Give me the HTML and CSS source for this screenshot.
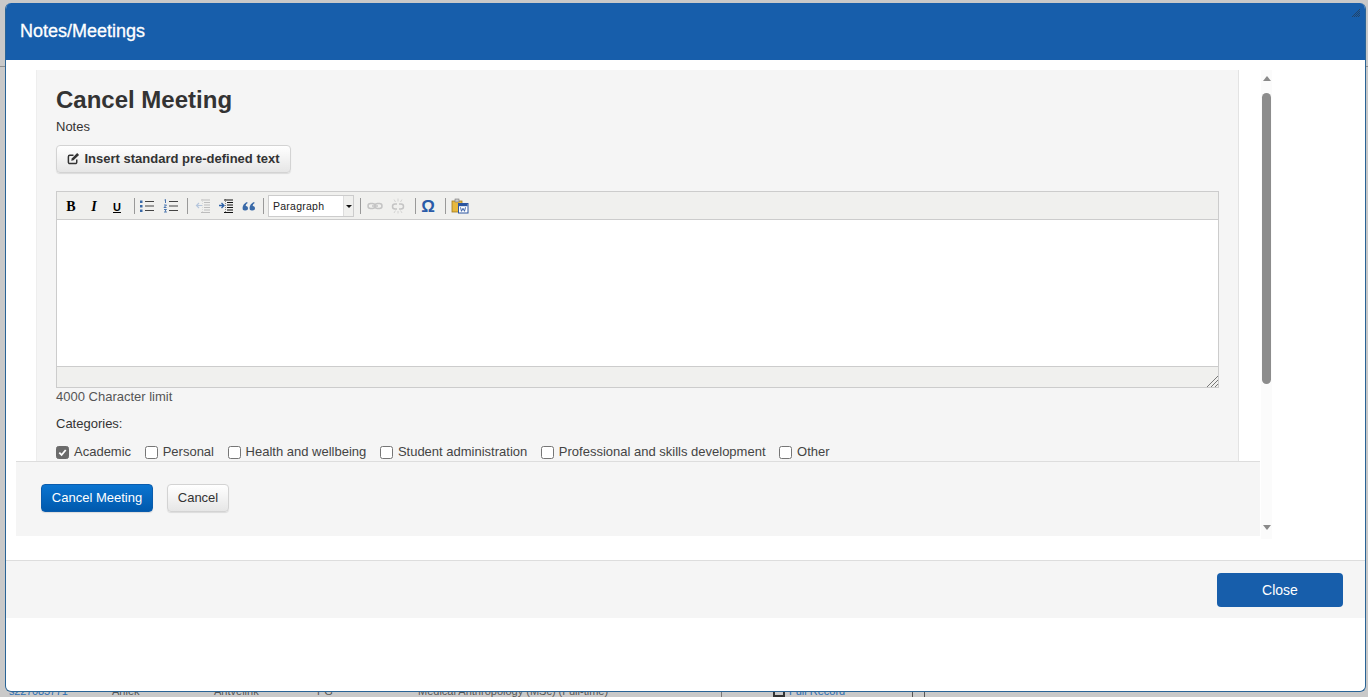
FILE: index.html
```html
<!DOCTYPE html>
<html lang="en">
<head>
<meta charset="utf-8">
<title>Notes/Meetings</title>
<link rel="stylesheet" href="styles.css">
</head>
<body>
<div class="backdrop">
  <div class="bg-line"></div>
  <div class="bg-row">
    <span class="c1">s227085771</span><span class="c2">Ahlek</span><span class="c3">Antvelink</span><span class="c4">PG</span><span class="c5">Medical Anthropology (MSc) (Full-time)</span><span class="c6"><svg class="bg-ic" viewBox="0 0 12 12"><path d="M1 1h10v10H1z" fill="none" stroke="#333" stroke-width="2"/></svg>Full Record</span><span class="c7"></span>
  </div>
</div>
<div class="dialog">
  <header class="dlg-head">
    <h1>Notes/Meetings</h1>
    <svg class="grip" viewBox="0 0 8 8"><path d="M0 8 8 0M2 8l6-6M4 8l4-4M6 8l2-2" stroke="#2a3a4a" stroke-width=".7" fill="none"/></svg>
  </header>
  <div class="dlg-body">
    <div class="scrollpane">
      <div class="content">
        <div class="card">
          <h2>Cancel Meeting</h2>
          <div class="lbl-notes">Notes</div>
          <button class="btn btn-insert">
            <svg class="ic-edit" viewBox="0 0 14 14"><path d="M10.500 8v3a1.500 1.500 0 0 1-1.500 1.500H3A1.500 1.500 0 0 1 1.500 11V5A1.500 1.500 0 0 1 3 3.500h4" fill="none" stroke="#333" stroke-width="1.600"/><path d="M4.500 9.500l.6-2.500L11 1.200l2 2L7 9z" fill="#333"/></svg>
            Insert standard pre-defined text
          </button>
          <div class="editor">
            <div class="toolbar">
              <span class="tb tb-b">B</span><span class="tb tb-i">I</span><span class="tb tb-u">U</span>
              <i class="sep sep-1"></i>
              <svg class="ti ti-wide" viewBox="0 0 16 14"><g fill="#3a6aa8"><rect x="1" y="1.500" width="2.500" height="2.500"/><rect x="1" y="6" width="2.500" height="2.500"/><rect x="1" y="10.500" width="2.500" height="2.500"/></g><path d="M6 2.500h9M6 7h9M6 11.500h9" stroke="#444" stroke-width="1.100"/></svg>
              <svg class="ti ti-wide" viewBox="0 0 16 14"><path d="M6 2.500h9M6 7h9M6 11.500h9" stroke="#444" stroke-width="1.100"/><path d="M1.500 1l1-.5V4M1 6h2.500L1 8.500h2.500M1 10.500h2.500L2 11.800l1.500 1.200H1" stroke="#3a6aa8" stroke-width=".9" fill="none"/></svg>
              <i class="sep sep-2"></i>
              <svg class="ti" viewBox="0 0 16 14"><path d="M6 1h9M9 3.500h6M9 6h6M9 8.500h6M9 11h6M6 13.500h9" stroke="#bdbdbd" stroke-width="1"/><path d="M7 6.500H1.500M4 4 1.500 6.500 4 9" stroke="#b5c6dc" stroke-width="1.200" fill="none"/><path d="M7.500 0v14" stroke="#ccc" stroke-width=".6" stroke-dasharray="1 1"/></svg>
              <svg class="ti" viewBox="0 0 16 14"><path d="M6 1h9M9 3.500h6M9 6h6M9 8.500h6M9 11h6M6 13.500h9" stroke="#111" stroke-width="1.100"/><path d="M1 6.500h5M3.500 4 6 6.500 3.500 9" stroke="#2d62a8" stroke-width="1.300" fill="none"/><path d="M7.500 0v14" stroke="#444" stroke-width=".6" stroke-dasharray="1 1"/></svg>
              <svg class="ti" viewBox="0 0 16 14"><path d="M2 11c-1-3 0-6 4-8l.7 1C5 5 4.600 6 4.800 7c1.600 0 2.200 1.200 2.200 2.200C7 10.500 6 11.500 4.500 11.500 3.300 11.500 2.400 11.300 2 11zM9 11c-1-3 0-6 4-8l.7 1c-1.700 1-2.100 2-1.900 3 1.600 0 2.200 1.200 2.200 2.200 0 1.300-1 2.300-2.500 2.300-1.200 0-2.100-.2-2.500-.5z" fill="#3a6aa8"/></svg>
              <i class="sep sep-3"></i>
              <div class="select"><span class="select-val">Paragraph</span><span class="select-arrow"></span></div>
              <i class="sep sep-4"></i>
              <svg class="ti" viewBox="0 0 16 14"><rect x="1" y="4.500" width="7" height="5" rx="2.500" fill="none" stroke="#c4c4c4" stroke-width="1.500"/><rect x="8" y="4.500" width="7" height="5" rx="2.500" fill="none" stroke="#c4c4c4" stroke-width="1.500"/><path d="M5 7h6" stroke="#c4c4c4" stroke-width="1.500"/></svg>
              <svg class="ti ti-unlink" viewBox="0 0 16 16"><path d="M7 6H5a2.500 2.500 0 0 0 0 5h2M9 6h2a2.500 2.500 0 0 1 0 5H9" fill="none" stroke="#c4c4c4" stroke-width="1.500"/><path d="M8 .5v3M8 13v2.500M4 1.500l1.500 2.500M12 1.500l-1.500 2.500M4 15l1.500-2.500M12 15l-1.500-2.500" stroke="#ccc" stroke-width=".8"/></svg>
              <i class="sep sep-5"></i>
              <span class="tb tb-omega">Ω</span>
              <i class="sep sep-6"></i>
              <svg class="ti ti-word" viewBox="0 0 18 16"><rect x="1" y="3" width="10" height="11" fill="#e7b83e" stroke="#a07a20" stroke-width=".8"/><rect x="4" y="1" width="4" height="3" fill="#c9c9c9" stroke="#777" stroke-width=".6"/><rect x="7.500" y="5.500" width="9.500" height="9.500" fill="#fff" stroke="#2a55a0"/><rect x="8" y="6" width="8.500" height="2.200" fill="#2a55a0"/><path d="M9.500 9.300l1 4 1.500-3 1.500 3 1-4" stroke="#2a55a0" fill="none" stroke-width=".9"/></svg>
            </div>
            <div class="edit-area"></div>
            <div class="statusbar">
              <svg class="resize" viewBox="0 0 11 11"><path d="M0 11 11 0M4 11l7-7M8 11l3-3" stroke="#777" stroke-width="1" fill="none"/></svg>
            </div>
          </div>
          <div class="limit">4000 Character limit</div>
          <div class="cat-label">Categories:</div>
          <div class="cats">
            <label class="cat"><span class="cb cb-on"><svg viewBox="0 0 12 12"><path d="M2.500 6.200 5 8.700l4.500-5.400" fill="none" stroke="#fff" stroke-width="2"/></svg></span>Academic</label>
            <label class="cat"><span class="cb"></span>Personal</label>
            <label class="cat"><span class="cb"></span>Health and wellbeing</label>
            <label class="cat"><span class="cb"></span>Student administration</label>
            <label class="cat"><span class="cb"></span>Professional and skills development</label>
            <label class="cat"><span class="cb"></span>Other</label>
          </div>
        </div>
        <div class="actions">
          <button class="btn btn-primary">Cancel Meeting</button>
          <button class="btn btn-cancel">Cancel</button>
        </div>
      </div>
      <div class="scrollbar">
        <span class="arrow arrow-up"></span>
        <span class="thumb"></span>
        <span class="arrow arrow-down"></span>
      </div>
    </div>
  </div>
  <footer class="dlg-foot">
    <button class="btn-close">Close</button>
  </footer>
</div>
</body>
</html>
```

FILE: styles.css
```css
* { box-sizing: border-box; }
html, body { margin: 0; height: 100%; overflow: hidden; }
body {
  background: #c9c9c9;
  font-family: "Liberation Sans", Arial, sans-serif;
  font-size: 13px;
  color: #333;
}
.backdrop { height: 697px; display: flex; flex-direction: column; }
.bg-line { margin-top: 66px; height: 1px; background: #8e8e8e; }
.bg-row {
  margin-top: auto;
  display: flex;
  height: 12px;
  font-size: 11px;
  line-height: 12px;
  color: #555;
  white-space: nowrap;
}
.bg-row span { display: block; }
.c1 { width: 112px; padding-left: 9px; color: #2b6cb0; letter-spacing: -.2px; }
.c2 { width: 102px; }
.c3 { width: 103px; }
.c4 { width: 101px; }
.c5 { width: 304px; border-right: 1px solid #777; }
.c6 { width: 191px; padding-left: 51px; color: #2b6cb0; border-right: 1px solid #555; }
.c7 { width: 12px; border-right: 1px solid #555; }
.bg-ic { width: 12px; height: 12px; margin-right: 4px; vertical-align: top; }

.dialog {
  position: absolute;
  left: 5px;
  top: 3px;
  width: 1361px;
  height: 689px;
  background: #fff;
  border: 1px solid #2a6496;
  border-top: 0;
  border-radius: 6px;
  display: flex;
  flex-direction: column;
  overflow: hidden;
}
.dlg-head {
  flex: none;
  height: 57px;
  background: #175eab;
  color: #fff;
  position: relative;
  display: flex;
  align-items: center;
  padding-left: 14px;
}
.dlg-head h1 {
  margin: 0;
  font-size: 18px;
  font-weight: 400;
  -webkit-text-stroke: .3px #fff;
}
.grip { position: absolute; right: 5px; top: 6px; width: 8px; height: 8px; }
.dlg-body { flex: none; height: 500px; padding: 10px 0 0 9px; }
.scrollpane { display: flex; height: 466px; }
.content { width: 1244px; position: relative; }
.card {
  margin-left: 21px;
  margin-right: 20px;
  height: 391px;
  background: #f5f5f5;
  border-right: 1px solid #e3e3e3;
  border-left: 1px solid #eee;
  padding: 16px 19px 0 19px;
}
.card h2 {
  margin: 0;
  font-size: 24px;
  line-height: 28px;
  font-weight: 700;
  color: #333;
}
.lbl-notes { margin-top: 5px; font-size: 13px; line-height: 16px; }
.btn {
  font-family: inherit;
  border-radius: 4px;
  cursor: pointer;
}
.btn-insert {
  margin-top: 10px;
  height: 28px;
  width: 235px;
  padding: 0 0 2px;
  display: flex;
  align-items: center;
  justify-content: center;
  gap: 4px;
  font-size: 13px;
  font-weight: 700;
  color: #333;
  background: linear-gradient(#fff, #e6e6e6);
  border: 1px solid #d3d3d3;
  box-shadow: 0 1px 1px rgba(0,0,0,.1);
}
.ic-edit { width: 13px; height: 13px; flex: none; }
.editor {
  margin-top: 18px;
  border: 1px solid #ccc;
  background: #fff;
}
.toolbar {
  height: 28px;
  background: #f0f0ee;
  border-bottom: 1px solid #ccc;
  display: flex;
  align-items: center;
  padding-left: 2.500px;
}
.tb {
  width: 23px;
  padding-top: 2px;
  text-align: center;
  font-family: "Liberation Serif", serif;
  font-size: 14px;
  font-weight: 700;
  color: #000;
  flex: none;
}
.tb-i { font-style: italic; }
.tb-u { text-decoration: underline; font-family: "Liberation Sans", sans-serif; font-size: 11px; }
.tb-omega { color: #2a5ba8; font-family: "Liberation Sans", sans-serif; font-size: 17px; width: 22px; }
.sep { width: 1px; height: 16px; background: #999; flex: none; }
.sep-1 { margin-left: 5.500px; }
.sep-2 { margin: 0 3.500px 0 4px; }
.sep-3 { margin: 0 4px 0 2.500px; }
.sep-4 { margin: 0 2.500px 0 6px; }
.sep-5 { margin: 0 1px 0 5.500px; }
.sep-6 { margin: 0 5px 0 6px; }
.ti { width: 16px; height: 14px; margin: 0 3.500px; flex: none; }
.ti-wide { margin: 0 4px; }
.ti-unlink { height: 16px; }
.ti-word { width: 18px; height: 16px; margin: 0; }
.select {
  width: 86px;
  height: 22px;
  background: #fff;
  border: 1px solid #ccc;
  display: flex;
  align-items: center;
  flex: none;
}
.select-val { flex: 1; padding-left: 4px; font-size: 10.500px; color: #222; letter-spacing: .25px; }
.select-arrow {
  width: 10px;
  height: 20px;
  background: #f0f0ee;
  border-left: 1px solid #ddd;
  position: relative;
}
.select-arrow::after {
  content: "";
  position: absolute;
  left: 2px;
  top: 9px;
  border: 3px solid transparent;
  border-top-color: #111;
  border-bottom: 0;
}
.edit-area { height: 146px; background: #fff; }
.statusbar {
  height: 21px;
  background: #f0f0ee;
  border-top: 1px solid #ccc;
  display: flex;
  justify-content: flex-end;
  align-items: flex-end;
}
.resize { width: 11px; height: 11px; }
.limit { font-size: 13px; line-height: 17px; color: #555; }
.cat-label { margin-top: 10px; font-size: 13px; line-height: 17px; }
.cats { margin-top: 12px; display: flex; gap: 13.600px; font-size: 13px; line-height: 16px; color: #444; }
.cat { display: flex; align-items: center; gap: 5px; }
.cb {
  width: 13px;
  height: 13px;
  flex: none;
  background: #fff;
  border: 1px solid #767676;
  border-radius: 2.500px;
}
.cb-on { background: #6b6b6b; border-color: #6b6b6b; }
.cb svg { display: block; width: 11px; height: 11px; }
.actions {
  position: absolute;
  left: 1px;
  top: 391px;
  width: 1244px;
  height: 75px;
  background: #f5f5f5;
  border-top: 1px solid #ddd;
  display: flex;
  align-items: center;
  gap: 14px;
  padding: 0 0 2px 25px;
}
.btn-primary {
  width: 112px;
  height: 28px;
  padding: 0 0 2px;
  font-size: 13px;
  color: #fff;
  background: linear-gradient(#0a74d0, #0059ad);
  border: 1px solid #0a5cad;
  box-shadow: 0 1px 1px rgba(0,0,0,.1);
}
.btn-cancel {
  width: 62px;
  height: 28px;
  padding: 0 0 2px;
  font-size: 13px;
  color: #333;
  background: linear-gradient(#fff, #e6e6e6);
  border: 1px solid #d3d3d3;
  box-shadow: 0 1px 1px rgba(0,0,0,.1);
}
.scrollbar {
  flex: none;
  width: 11px;
  margin-left: 2px;
  background: #fbfbfb;
  display: flex;
  flex-direction: column;
  align-items: center;
  height: 469px;
  padding-top: 6px;
}
.arrow { width: 0; height: 0; border: 4px solid transparent; flex: none; }
.arrow-up { border-top: 0; border-bottom: 5px solid #8a8a8a; }
.arrow-down { border-bottom: 0; border-top: 5px solid #8a8a8a; margin-top: 141px; }
.thumb { width: 9px; height: 291px; margin-top: 12px; border-radius: 5px; background: #8c8c8c; flex: none; }
.dlg-foot {
  flex: none;
  height: 58px;
  background: #f5f5f5;
  border-top: 1px solid #ddd;
  display: flex;
  justify-content: flex-end;
  align-items: center;
  padding-right: 22px;
}
.btn-close {
  width: 126px;
  height: 34px;
  border: 0;
  border-radius: 4px;
  background: #175eab;
  color: #fff;
  font-family: inherit;
  font-size: 14px;
}
```
